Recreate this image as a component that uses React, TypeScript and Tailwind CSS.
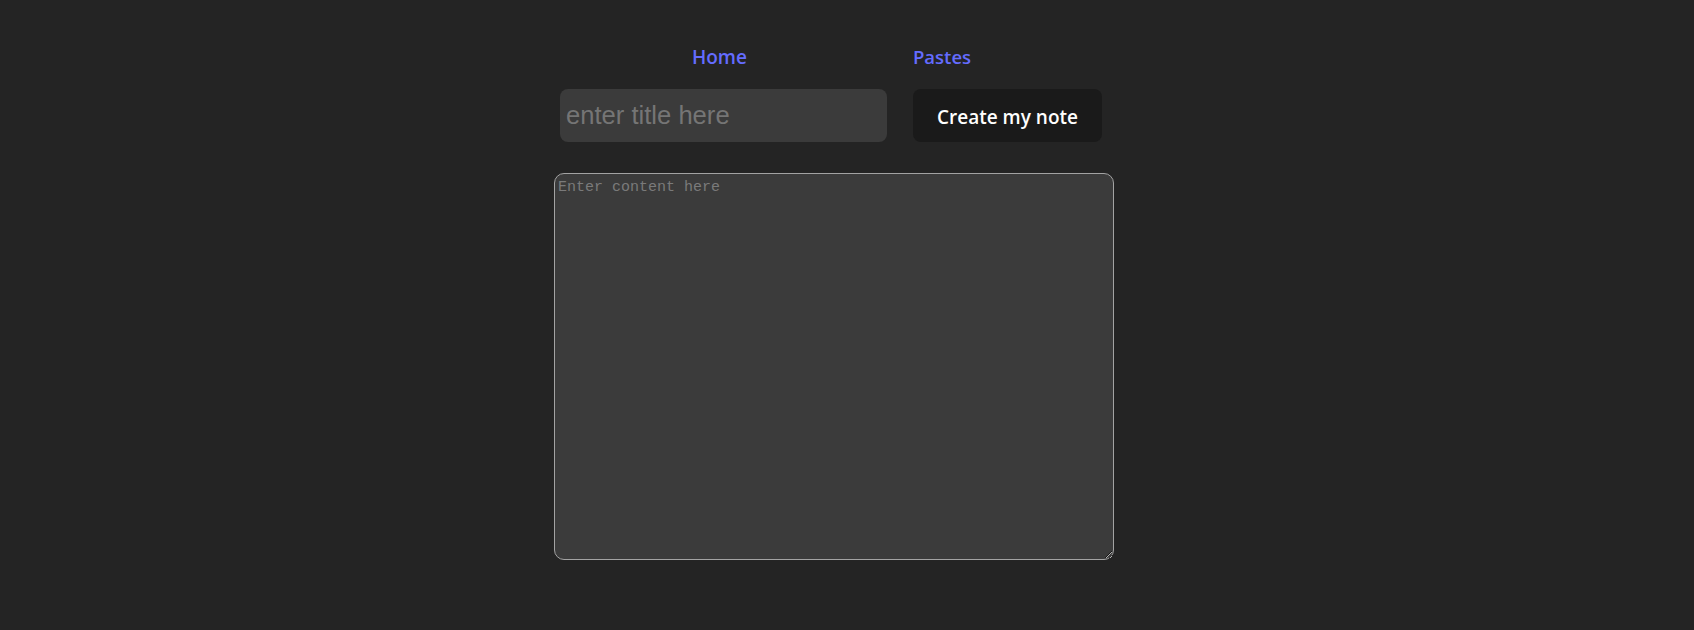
import React from "react";

export default function App() {
  return (
    <div className="w-full min-h-[630px] bg-[#242424] flex justify-center pr-[26px]" style={{ fontFamily: '"Open Sans", "Noto Sans", sans-serif' }}>
      <div className="w-[560px] flex flex-col pt-[44px]">
        <nav className="flex flex-row pl-[138px] h-[26px] items-center">
          <a href="#" className="text-[19px] leading-[26px] font-semibold text-[#646cff] no-underline">Home</a>
          <a href="#" className="ml-[166px] text-[18.5px] leading-[26px] font-semibold text-[#646cff] no-underline">Pastes</a>
        </nav>
        <div className="flex flex-row mt-[19px] pl-[6px] gap-[26px]">
          <input
            type="text"
            placeholder="enter title here"
            className="w-[327px] h-[53px] rounded-[8px] bg-[#3b3b3b] pl-[6px] text-[25.6px] text-white placeholder:text-[#757575] outline-none border-0"
            style={{ fontFamily: '"Liberation Sans", Arial, sans-serif' }}
          />
          <button className="w-[189px] h-[53px] rounded-[8px] bg-[#1a1a1a] text-white text-[19px] font-semibold pt-[3px]">
            Create my note
          </button>
        </div>
        <textarea
          placeholder="Enter content here"
          className="mt-[31px] w-[560px] h-[387px] rounded-[10px] border border-[#a3a3a3] bg-[#3b3b3b] pt-[5px] px-[3px] text-[15px] leading-[17px] text-white placeholder:text-[#7a7a7a] outline-none"
          style={{ fontFamily: '"Liberation Mono", "DejaVu Sans Mono", monospace' }}
        />
      </div>
    </div>
  );
}
